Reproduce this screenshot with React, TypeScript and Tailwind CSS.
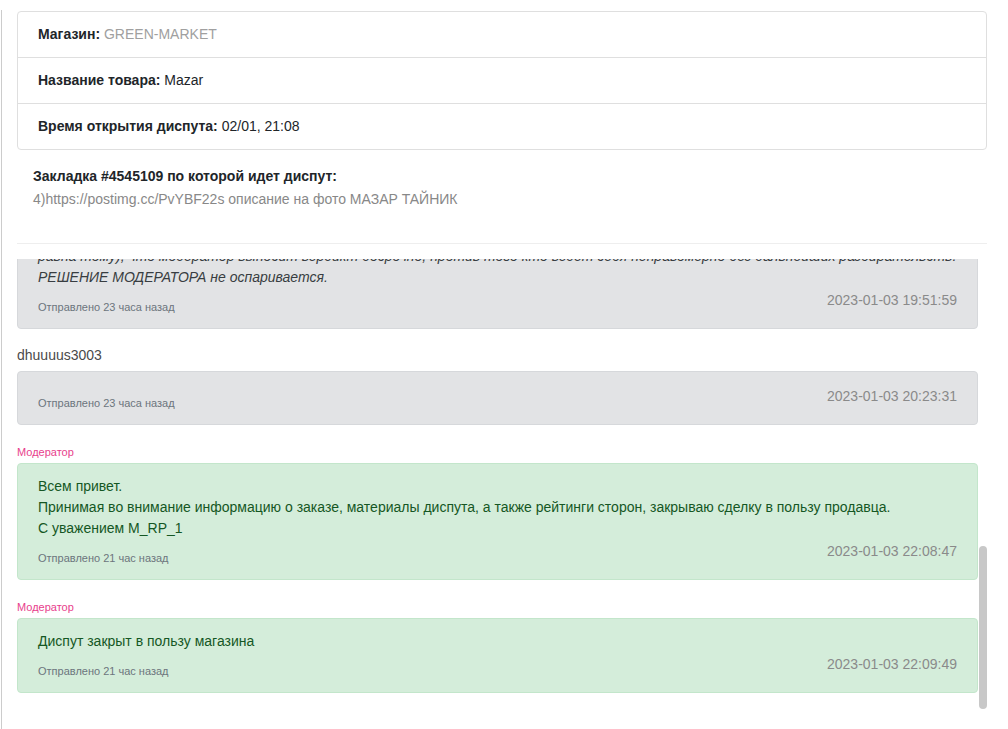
import { useLayoutEffect, useRef, useState } from "react";

type Msg = {
  id: number;
  author?: string;
  moderator?: boolean;
  tone: "gray" | "green";
  lines: string[];
  italic?: string[];
  ago: string;
  date: string;
};

const INFO = [
  { label: "Магазин:", value: "GREEN-MARKET", muted: true },
  { label: "Название товара:", value: "Mazar" },
  { label: "Время открытия диспута:", value: "02/01, 21:08" },
];

const MESSAGES: Msg[] = [
  {
    id: 1,
    author: "dhuuuus3003",
    tone: "gray",
    lines: ["Здравствуйте, открываю диспут по заказу."],
    ago: "1 день назад",
    date: "2023-01-02 21:08:12",
  },
  {
    id: 2,
    author: "GREEN-MARKET",
    tone: "gray",
    lines: ["Добрый день. Пришлите, пожалуйста, подробности."],
    ago: "1 день назад",
    date: "2023-01-02 21:40:05",
  },
  {
    id: 3,
    author: "dhuuuus3003",
    tone: "gray",
    lines: ["Все подробности указал в описании выше.", "Жду ответа."],
    ago: "1 день назад",
    date: "2023-01-02 22:02:47",
  },
  {
    id: 4,
    author: "GREEN-MARKET",
    tone: "gray",
    lines: ["Информацию получили, проверяем.", "Ожидаем решения модератора."],
    ago: "1 день назад",
    date: "2023-01-02 22:31:19",
  },
  {
    id: 5,
    moderator: true,
    tone: "gray",
    lines: [
      "Уважаемые участники диспута!",
      "Диспут рассматривается модератором в порядке очереди.",
      "Срок рассмотрения диспута — до 48 часов с момента открытия.",
      "Просим стороны соблюдать правила общения и отвечать в течение 24 часов.",
      "Запрещены оскорбления, угрозы, а также публикация личных данных.",
      "Модератор вправе запросить у сторон дополнительную информацию.",
      "Все материалы предоставляются только в рамках данного диспута.",
      "Обсуждение условий сделки вне площадки запрещено.",
      "Попытка ввести модератора в заблуждение ведёт к блокировке аккаунта.",
      "Если одна из сторон не отвечает более 24 часов, диспут может быть закрыт.",
      "Нарушение правил любой из сторон (грубость, отказ от ответа и т.п. прирав-",
    ],
    italic: [
      "равна тому), что модератор выносит вердикт досрочно, против того кто ведет себя неправомерно без дальнейших разбирательств.",
      "РЕШЕНИЕ МОДЕРАТОРА не оспаривается.",
    ],
    ago: "23 часа назад",
    date: "2023-01-03 19:51:59",
  },
  {
    id: 6,
    author: "dhuuuus3003",
    tone: "gray",
    lines: [],
    ago: "23 часа назад",
    date: "2023-01-03 20:23:31",
  },
  {
    id: 7,
    moderator: true,
    tone: "green",
    lines: [
      "Всем привет.",
      "Принимая во внимание информацию о заказе, материалы диспута, а также рейтинги сторон, закрываю сделку в пользу продавца.",
      "С уважением M_RP_1",
    ],
    ago: "21 час назад",
    date: "2023-01-03 22:08:47",
  },
  {
    id: 8,
    moderator: true,
    tone: "green",
    lines: ["Диспут закрыт в пользу магазина"],
    ago: "21 час назад",
    date: "2023-01-03 22:09:49",
  },
];

function Message({ m }: { m: Msg }) {
  const bubble =
    m.tone === "green"
      ? "border-[#c3e6cb] bg-[#d4edda] text-[#155724]"
      : "border-[#d6d8db] bg-[#e2e3e5] text-[#383d41]";
  return (
    <div>
      {m.moderator && (
        <div className="pt-[3px] pb-[2px] text-[11px] leading-[17px] text-[#e83e8c]">Модератор</div>
      )}
      {m.author && <div className="pb-[5px] text-sm leading-[21px] text-[#4a4a4a]">{m.author}</div>}
      <div className={`mb-4 rounded-[4px] border px-5 py-3 text-sm leading-[21px] ${bubble}`}>
        {m.lines.map((l, i) => (
          <div key={i}>{l}</div>
        ))}
        {m.italic?.map((l, i) => (
          <div key={`i${i}`} className="italic">
            {l}
          </div>
        ))}
        <div className="mt-[2px] flex items-start justify-between">
          <span className="pt-[8px] text-[11px] leading-[18px] text-[#6c757d]">Отправлено {m.ago}</span>
          <span className="text-sm leading-[21px] text-[#8a8a8a]">{m.date}</span>
        </div>
      </div>
    </div>
  );
}

export default function App() {
  const chatRef = useRef<HTMLDivElement>(null);
  const [thumb, setThumb] = useState({ top: 0, height: 0 });

  useLayoutEffect(() => {
    const el = chatRef.current;
    if (!el) return;
    el.scrollTop = el.scrollHeight;
    const ch = el.clientHeight;
    const sh = el.scrollHeight;
    setThumb({ top: (el.scrollTop / sh) * ch, height: (ch * ch) / sh });
  }, []);

  return (
    <div className="h-[729px] overflow-hidden bg-white pt-[10px] font-['Liberation_Sans',Arial,sans-serif] text-[#212529]">
      <div className="ml-px h-full border-l border-[#ccc] pt-px pr-[21px] pl-[15px]">
        <div className="rounded-[4px] border border-[#dfdfdf]">
          {INFO.map((row, i) => (
            <div
              key={row.label}
              className={`px-5 py-3 text-sm leading-[21px] ${i > 0 ? "border-t border-[#dfdfdf]" : ""}`}
            >
              <span className="font-bold">{row.label}</span>{" "}
              <span className={row.muted ? "text-[#a0a0a0]" : ""}>{row.value}</span>
            </div>
          ))}
        </div>

        <div className="border-b border-[#eee] pt-4 pb-[33px] pl-4 text-sm leading-[21px]">
          <div className="mb-[2px] font-bold">Закладка #4545109 по которой идет диспут:</div>
          <div className="text-[#888]">4)https://postimg.cc/PvYBF22s описание на фото МАЗАР ТАЙНИК</div>
        </div>

        <div className="mt-[15px] flex h-[450px]">
          <div ref={chatRef} className="min-w-0 flex-1 overflow-hidden">
            {MESSAGES.map((m) => (
              <Message key={m.id} m={m} />
            ))}
          </div>
          <div className="w-[9px] shrink-0 pl-px">
            <div
              className="rounded-[4px] bg-[#c8c8c8]"
              style={{ marginTop: thumb.top, height: thumb.height }}
            />
          </div>
        </div>
      </div>
    </div>
  );
}
